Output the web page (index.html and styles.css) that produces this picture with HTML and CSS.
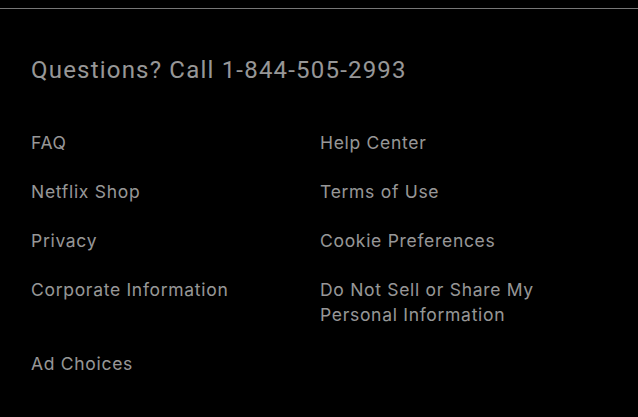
FILE: index.html
```html
<!DOCTYPE html>
<html>
<head>
<meta charset="utf-8">
<link rel="stylesheet" href="styles.css">
</head>
<body>
<footer class="footer">
  <p class="footer-title">Questions? Call 1-844-505-2993</p>
  <ul class="footer-links">
    <li><a href="#">FAQ</a></li>
    <li><a href="#">Help Center</a></li>
    <li><a href="#">Netflix Shop</a></li>
    <li><a href="#">Terms of Use</a></li>
    <li><a href="#">Privacy</a></li>
    <li><a href="#">Cookie Preferences</a></li>
    <li><a href="#">Corporate Information</a></li>
    <li><a href="#">Do Not Sell or Share My Personal Information</a></li>
    <li><a href="#">Ad Choices</a></li>
  </ul>
</footer>
</body>
</html>
```
FILE: styles.css
```css
html, body {
  margin: 0;
  padding: 0;
  background: #000;
}
.footer {
  margin-top: 8px;
  border-top: 1px solid #777;
  padding: 46px 31px 40px 31px;
  color: rgba(255,255,255,0.6);
}
.footer-title {
  margin: 0 0 45px;
  font-family: Roboto, sans-serif;
  font-size: 24px;
  line-height: 30px;
  font-weight: 400;
  letter-spacing: 1.2px;
}
.footer-links {
  list-style: none;
  margin: 0;
  padding: 0;
  display: grid;
  grid-template-columns: 289px 1fr;
  row-gap: 24px;
}
.footer-links li {
  padding-right: 12px;
  font-family: Inter, sans-serif;
  font-size: 17.5px;
  line-height: 25px;
  letter-spacing: 0.7px;
}
.footer-links a {
  color: inherit;
  text-decoration: none;
}
```
